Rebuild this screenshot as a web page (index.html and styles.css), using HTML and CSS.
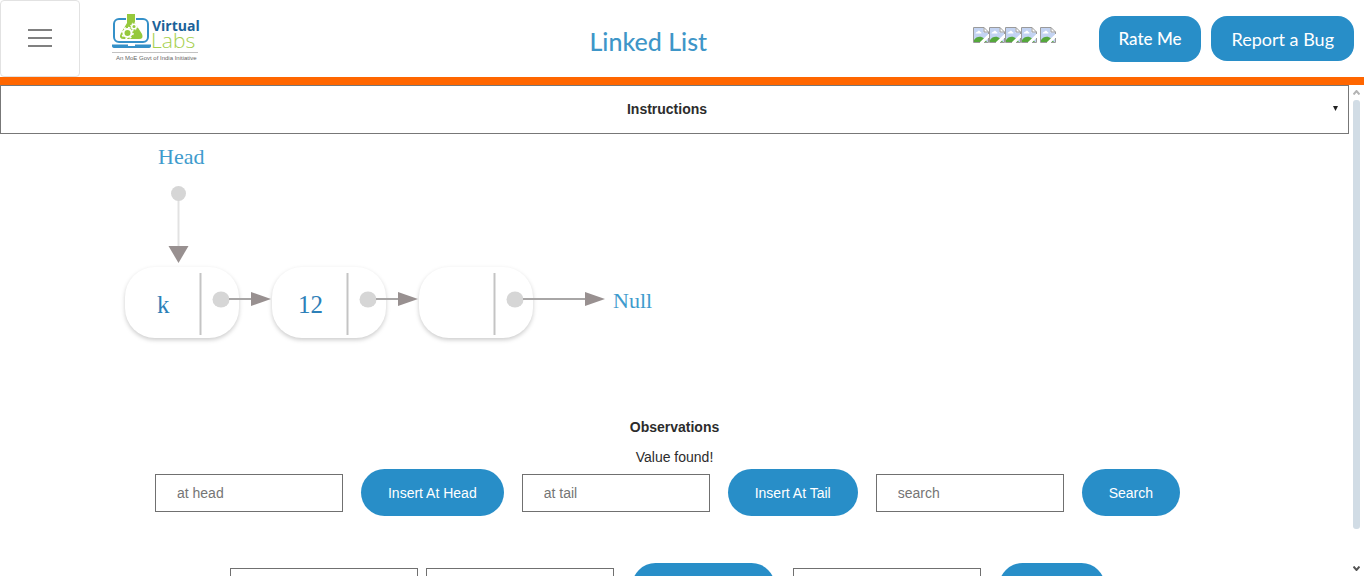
FILE: index.html
```html
<!DOCTYPE html>
<html lang="en">
<head>
<meta charset="utf-8">
<meta name="viewport" content="width=device-width, initial-scale=1">
<title>Linked List</title>
<link rel="stylesheet" href="styles.css">
</head>
<body>
<svg width="0" height="0" class="defs" aria-hidden="true">
  <symbol id="broken" viewBox="0 0 16 16">
    <path d="M0.5 0.5H11L15.5 5V15.5H0.5Z" fill="#fff"/>
    <path d="M1 1H10.500V5.500H15V15H1Z" fill="#c3d3f2"/>
    <path d="M2.500 6.500C2.500 5 4 5 4.300 5C4.600 3.300 7 3.300 7.400 5C8.600 5 8.600 6.500 8.300 6.500Z" fill="#fff"/>
    <path d="M1 15V13C3 9.500 8 8.500 11 11.500L14 15Z" fill="#55a83c"/>
    <path d="M6 16L16 6.500V10.500L10.500 16Z" fill="#fff"/>
    <path d="M7 15.500H0.500V0.500H11L15.500 5V7M11 0.500V5H15.500M11 15.500H15.500V11" fill="none" stroke="#9a9a9a"/>
  </symbol>
</svg>
<header class="header">
  <div class="brand">
    <button class="menu" type="button" aria-label="Menu">
      <span class="bar"></span><span class="bar"></span><span class="bar"></span>
    </button>
    <a class="logo" href="#" aria-label="Virtual Labs">
      <svg width="88" height="50" viewBox="0 0 88 50">
        <rect x="2" y="5" width="34" height="23" rx="5" fill="none" stroke="#3490c8" stroke-width="2"/>
        <path d="M15 0H23V9L30 20Q32 25 27 25H12Q6 25 9 19L15 9Z" fill="#96c93d" stroke="#fff" stroke-width="2" paint-order="stroke"/>
        <circle cx="15.500" cy="19" r="4" fill="none" stroke="#fff" stroke-width="2"/>
        <circle cx="15.500" cy="19" r="5.500" fill="none" stroke="#fff" stroke-width="1.500" stroke-dasharray="2 2.300"/>
        <circle cx="22" cy="12.500" r="2.300" fill="none" stroke="#fff" stroke-width="1.500"/>
        <circle cx="22" cy="12.500" r="3.500" fill="none" stroke="#fff" stroke-dasharray="1.300 1.450"/>
        <path d="M0 30.500H16V32H23V30.500H39V32Q39 34 36 34H3Q0 34 0 32Z" fill="#3490c8"/>
        <text x="40" y="17" class="logo-top">Virtual</text>
        <text x="39" y="34" class="logo-bottom">Labs</text>
        <path d="M0 38.500H86" stroke="#c2c2c2"/>
        <text x="4" y="46" class="logo-note">An MoE Govt of India Initiative</text>
      </svg>
    </a>
  </div>
  <h1 class="title">Linked List</h1>
  <div class="actions">
    <div class="stars" role="img" aria-label="Rating">
      <svg class="star"><use href="#broken"/></svg><svg class="star"><use href="#broken"/></svg><svg class="star"><use href="#broken"/></svg><svg class="star"><use href="#broken"/></svg><svg class="star star-last"><use href="#broken"/></svg>
    </div>
    <button class="pill rate" type="button">Rate Me</button>
    <button class="pill" type="button">Report a Bug</button>
  </div>
</header>
<div class="frame">
  <main class="content">
    <button class="instructions" type="button">
      <span class="instructions-label">Instructions</span>
      <svg width="5" height="5" viewBox="0 0 5 5" aria-hidden="true"><path d="M0 0H5L2.500 5Z" fill="#222"/></svg>
    </button>
    <svg class="canvas" width="700" height="276" viewBox="0 0 700 276" role="img" aria-label="Linked list with three nodes">
      <defs>
        <g id="node">
          <rect class="node-box" x="0" y="0" width="114" height="71" rx="30"/>
          <path d="M75.500 6V68" stroke="#c4c4c4" stroke-width="2"/>
          <ellipse cx="96" cy="32.500" rx="8.500" ry="8" fill="#d6d6d6"/>
        </g>
        <path id="tip" d="M0 -7L20 0L0 7Z" fill="#989090"/>
      </defs>
      <text x="158" y="30" class="tag">Head</text>
      <path d="M178.500 60V112" stroke="#e2e2e2" stroke-width="2"/>
      <circle cx="178.500" cy="59.500" r="7.500" fill="#d6d6d6"/>
      <path d="M168.500 112H188.500L178.500 129Z" fill="#989090"/>
      <use href="#node" x="125" y="133"/>
      <use href="#node" x="272" y="133"/>
      <use href="#node" x="419" y="133"/>
      <path d="M229 165H252M376 165H399M523 165H586" stroke="#a8a6a6" stroke-width="2"/>
      <use href="#tip" x="251" y="165"/>
      <use href="#tip" x="398" y="165"/>
      <use href="#tip" x="585" y="165"/>
      <text x="157" y="179" class="value">k</text>
      <text x="298" y="179" class="value">12</text>
      <text x="613" y="174" class="tag">Null</text>
    </svg>
    <h2 class="heading">Observations</h2>
    <p class="message">Value found!</p>
    <form class="row">
      <input class="field" type="text" placeholder="at head" aria-label="Value at head">
      <button class="action" type="button">Insert At Head</button>
      <input class="field" type="text" placeholder="at tail" aria-label="Value at tail">
      <button class="action" type="button">Insert At Tail</button>
      <input class="field" type="text" placeholder="search" aria-label="Search value">
      <button class="action" type="button">Search</button>
    </form>
    <form class="row">
      <div class="pair">
        <input class="field" type="text" aria-label="Value">
        <input class="field" type="text" aria-label="Index">
      </div>
      <button class="action" type="button">Insert At Index</button>
      <input class="field" type="text" aria-label="Value to remove">
      <button class="action" type="button">Remove</button>
    </form>
  </main>
  <div class="scroll" aria-hidden="true">
    <svg width="7" height="5" viewBox="0 0 7 5"><path d="M0.500 4.500L3.500 1L6.500 4.500" fill="none" stroke="#b4b4b4" stroke-width="2"/></svg>
    <div class="track"><div class="thumb"></div></div>
    <svg width="7" height="5" viewBox="0 0 7 5"><path d="M0.500 0.500L3.500 4L6.500 0.500" fill="none" stroke="#555" stroke-width="2"/></svg>
  </div>
</div>
</body>
</html>
```
FILE: styles.css
```css
* { box-sizing: border-box; }

body {
  margin: 0;
  height: 100vh;
  display: flex;
  flex-direction: column;
  overflow: hidden;
  background: #fff;
  color: #2c2c2c;
  font: 14px/20px "Liberation Sans", Arial, sans-serif;
}

button, input { font: inherit; }

.defs { display: none; }

.header {
  flex: none;
  display: flex;
  align-items: center;
  border-bottom: 8px solid #f60;
}

.brand {
  flex: 0 0 324px;
  display: flex;
  align-items: center;
  gap: 32px;
}

.menu {
  width: 80px;
  height: 77px;
  padding: 0 0 2px;
  display: flex;
  flex-direction: column;
  align-items: center;
  justify-content: center;
  gap: 6px;
  background: #fff;
  border: 1px solid #e2e2e2;
  border-radius: 4px;
}

.bar {
  width: 24px;
  height: 2px;
  background: #808080;
}

.logo svg { display: block; }

.logo-top {
  font: bold 14px "Open Sans", sans-serif;
  fill: #1b6299;
}

.logo-bottom {
  font: 300 21px "Open Sans", sans-serif;
  fill: #a5cf4c;
}

.logo-note {
  font: 6px "Liberation Sans", Arial, sans-serif;
  fill: #666;
}

.title {
  flex: 1;
  margin: 0;
  padding-top: 4px;
  text-align: center;
  color: #3e96c8;
  font: 500 25px/32px Lato, sans-serif;
}

.actions {
  display: flex;
  align-items: center;
  gap: 10px;
  padding-right: 10px;
}

.stars {
  display: flex;
  margin-right: 33px;
  padding-bottom: 7px;
}

.star {
  width: 16px;
  height: 16px;
}

.star-last { margin-left: 3px; }

.pill {
  height: 45px;
  padding: 0 20px;
  border: 0;
  border-radius: 16px;
  background: #288ec8;
  color: #fff;
  font: 18px/24px Lato, sans-serif;
}

.rate {
  height: 46px;
  font-size: 17px;
  font-weight: 500;
}

.frame {
  flex: 1;
  min-height: 0;
  display: flex;
}

.content {
  flex: 1;
  min-width: 0;
  overflow-y: auto;
  scrollbar-width: none;
}

.instructions {
  width: 100%;
  height: 49px;
  padding: 0 10px 2px 0;
  display: flex;
  align-items: center;
  background: #fff;
  border: 1px solid #777;
  color: inherit;
  font-weight: bold;
}

.instructions-label { flex: 1; }

.canvas { display: block; }

.node-box {
  fill: #fff;
  filter: drop-shadow(0 2px 2px rgba(0, 0, 0, 0.2));
}

.tag {
  font: 22px "Liberation Serif", "Times New Roman", serif;
  fill: #3e9bcd;
}

.value {
  font: 25px "Liberation Serif", "Times New Roman", serif;
  fill: #2d80b8;
}

.heading {
  margin: 7px 0 10px;
  text-align: center;
  font-size: 14px;
  line-height: 20px;
}

.message {
  margin: 0 0 2px;
  text-align: center;
}

.row {
  display: flex;
  justify-content: center;
  align-items: center;
  gap: 18px;
  margin: 0 0 47px;
  padding-right: 14px;
}

.pair {
  display: flex;
  gap: 8px;
}

.field {
  width: 188px;
  height: 38px;
  padding: 0 21px;
  border: 1px solid #707070;
  border-radius: 0;
  background: #fff;
  color: #2c2c2c;
}

.field::placeholder { color: #757575; }

.action {
  height: 47px;
  padding: 0 27px;
  border: 0;
  border-radius: 24px;
  background: #288ec8;
  color: #fff;
}

.scroll {
  flex: none;
  width: 15px;
  padding: 5px 4px;
  display: flex;
  flex-direction: column;
  align-items: center;
  gap: 5px;
}

.track {
  flex: 1;
  width: 7px;
}

.thumb {
  height: 93%;
  border-radius: 3px;
  background: #d1dce5;
}
```
